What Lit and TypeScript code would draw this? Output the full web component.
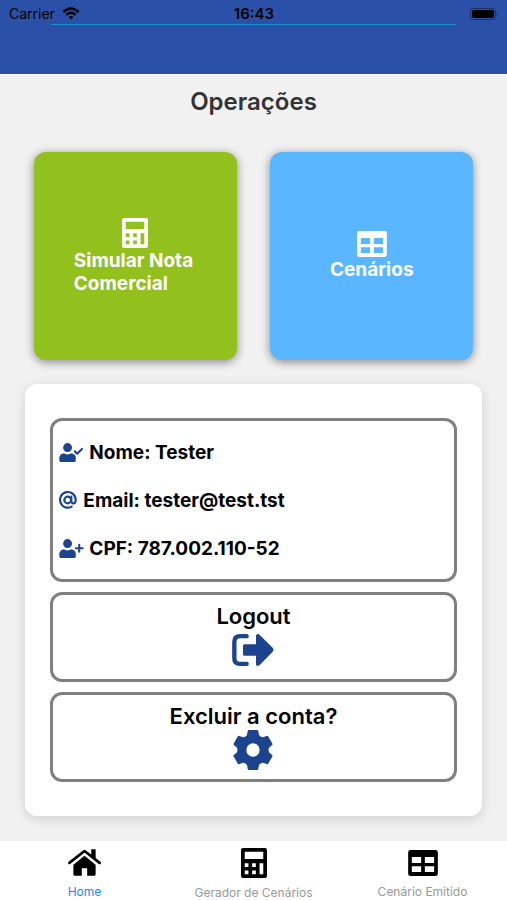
import { LitElement, html, css, svg } from "lit";
import { customElement, property } from "lit/decorators.js";

const calculator = svg`<path fill-rule="evenodd" d="M6 0H71Q77 0 77 6V83Q77 89 71 89H6Q0 89 0 83V6Q0 0 6 0ZM11 11V33H66V11ZM11 45V56H22V45ZM33 45V56H44V45ZM55 45V78H66V45ZM11 67V78H22V67ZM33 67V78H44V67Z"/>`;
const table = svg`<path fill-rule="evenodd" d="M7 0H82Q89 0 89 7V71Q89 78 82 78H7Q0 78 0 71V7Q0 0 7 0ZM11 21V39H39V21ZM50 21V39H78V21ZM11 49V66H39V49ZM50 49V66H78V49Z"/>`;
const home = svg`<path d="M49 19L82 46V75Q82 78 79 78H57V56H41V78H19Q16 78 16 75V46Z"/><path d="M69 0H82V28L69 17Z"/><path d="M4 40L49 5L94 40" fill="none" stroke="currentColor" stroke-width="8" stroke-linecap="round" stroke-linejoin="round"/>`;
const person = svg`<circle cx="25" cy="13" r="13"/><path d="M1 51V44Q1 33 13 30Q25 36 37 30Q49 33 49 44V51Q49 55 45 55H5Q1 55 1 51Z"/>`;
const personCheck = svg`${person}<path d="M46 24L53 31L67 17" fill="none" stroke="currentColor" stroke-width="6" stroke-linecap="round" stroke-linejoin="round"/>`;
const personPlus = svg`${person}<path d="M59 17V37M49 27H69" fill="none" stroke="currentColor" stroke-width="6" stroke-linecap="round"/>`;
const at = svg`<g fill="none" stroke="currentColor" stroke-width="6.5" stroke-linecap="round" stroke-linejoin="round"><circle cx="26" cy="27" r="10"/><path d="M37 17V31Q37 37 43 37Q50 37 50 27A23.5 23.5 0 1 0 38 47"/></g>`;
const exit = svg`<path d="M76 0Q80 -1 84 3L122 41Q127 47 122 53L84 92Q80 96 76 95Q72 95 72 90V65H38Q33 65 33 60V35Q33 30 38 30H72V5Q72 0 76 0Z"/><path d="M44 6H24Q7 6 7 23V72Q7 89 24 89H44" fill="none" stroke="currentColor" stroke-width="13" stroke-linecap="round"/>`;
const gear = svg`${[0, 60, 120, 180, 240, 300].map(
  (a) => svg`<path transform="rotate(${a})" d="M-12 -60H12Q16 -60 16 -56L18 -45Q22 -40 28 -36L0 -21L-28 -36Q-22 -40 -18 -45L-16 -56Q-16 -60 -12 -60Z"/>`
)}<circle r="31.5" fill="none" stroke="currentColor" stroke-width="23"/>`;
const wifi = svg`<path d="M9 12.5L6.6 10Q9 8 11.4 10Z"/><g fill="none" stroke="currentColor" stroke-width="2.4"><path d="M4.3 7.8Q9 3.8 13.7 7.8"/><path d="M1.4 5Q9 -2 16.6 5"/></g>`;
const battery = svg`<rect x="0.5" y="0.5" width="25" height="11" rx="3" fill="none" stroke="currentColor" opacity=".4"/><rect x="2" y="2" width="22" height="8" rx="2"/><path d="M27 4Q29 6 27 8Z" opacity=".5"/>`;

const icons = {
  calculator: { box: "0 0 77 89", w: 26, h: 30, art: calculator },
  table: { box: "0 0 89 78", w: 30, h: 26, art: table },
  home: { box: "0 0 98 78", w: 33, h: 27, art: home },
  personCheck: { box: "0 0 70 55", w: 24, h: 19, art: personCheck },
  personPlus: { box: "0 0 70 55", w: 24, h: 19, art: personPlus },
  at: { box: "0 0 54 54", w: 18, h: 18, art: at },
  exit: { box: "0 0 126 95", w: 42, h: 32, art: exit },
  gear: { box: "-60 -60 120 120", w: 40, h: 40, art: gear },
  wifi: { box: "0 0 18 13", w: 18, h: 13, art: wifi },
  battery: { box: "0 0 29 12", w: 29, h: 12, art: battery },
};

@customElement("app-icon")
class AppIcon extends LitElement {
  @property() name: keyof typeof icons = "home";

  static styles = css`
    :host { display: inline-flex; flex: none; }
    .glyph { display: block; fill: currentColor; overflow: visible; }
  `;

  render() {
    const icon = icons[this.name];
    return html`<svg class="glyph" viewBox=${icon.box} width=${icon.w} height=${icon.h} aria-hidden="true">${icon.art}</svg>`;
  }
}

@customElement("app-root")
class AppRoot extends LitElement {
  static styles = css`
    :host {
      display: flex;
      flex-direction: column;
      min-height: 100vh;
      background: #f1f1f1;
      color: #000;
      font-family: Inter, "Liberation Sans", sans-serif;
    }
    * { box-sizing: border-box; }
    button { font: inherit; color: inherit; cursor: pointer; }
    .top { height: 75px; background: #2a50a7; border-bottom: 1px solid #fff; }
    .status {
      display: grid;
      grid-template-columns: 1fr auto 1fr;
      align-items: center;
      height: 24px;
      padding: 3px 8px 0 9px;
      font-size: 14px;
      line-height: 20px;
    }
    .carrier { display: flex; align-items: center; gap: 7px; }
    .clock { font-size: 15px; font-weight: 600; }
    .battery { justify-self: end; }
    .rule { width: 80%; height: 1px; margin: 0 auto; background: #1b8fd0; }
    .main { flex: 1; display: flex; flex-direction: column; align-items: center; }
    .title {
      margin: 12px 0 35px;
      font-size: 24px;
      line-height: 30px;
      font-weight: 600;
      color: #333;
    }
    .cards { display: flex; justify-content: space-evenly; width: 100%; }
    .card {
      display: flex;
      flex-direction: column;
      align-items: center;
      justify-content: center;
      gap: 1px;
      width: 40%;
      min-height: 208px;
      padding: 0 40px;
      border: 0;
      border-radius: 12px;
      box-shadow: 0 2px 10px rgba(0, 0, 0, 0.45);
    }
    .card .label {
      font-size: 19px;
      line-height: 23px;
      font-weight: 700;
      text-align: left;
    }
    .card.green { background: #92c01d; color: #fff; }
    .card.blue { background: #5ab6ff; color: #fff; }
    .panel {
      display: flex;
      flex-direction: column;
      gap: 10px;
      width: 90%;
      margin: 24px 0;
      padding: 34px 25px;
      border-radius: 12px;
      background: #fff;
      box-shadow: 0 3px 12px rgba(0, 0, 0, 0.14);
    }
    .box {
      border: 3px solid #808080;
      border-radius: 12px;
      background: #fff;
    }
    .info { margin: 0; padding: 7px 6px; list-style: none; }
    .row {
      display: flex;
      align-items: center;
      gap: 6px;
      height: 48px;
      font-size: 19px;
      font-weight: 700;
    }
    .blueicon { color: #1c448e; }
    .action {
      display: flex;
      flex-direction: column;
      align-items: center;
      height: 90px;
      padding: 8px 0 0;
      font-size: 22px;
      line-height: 26px;
      font-weight: 600;
    }
    .slot { display: flex; align-items: center; height: 42px; }
    .tabs {
      display: grid;
      grid-template-columns: repeat(3, 1fr);
      background: #fff;
    }
    .tab {
      display: flex;
      flex-direction: column;
      align-items: center;
      height: 59px;
      padding-top: 7px;
      font-size: 12px;
      line-height: 16px;
      color: #999;
      text-decoration: none;
    }
    .tab.active { color: #2089f0; }
    .tabicon { display: flex; align-items: center; height: 30px; margin-bottom: 7px; color: #000; }
  `;

  render() {
    return html`
      <header class="top">
        <div class="status">
          <span class="carrier">Carrier <app-icon name="wifi"></app-icon></span>
          <span class="clock">16:43</span>
          <app-icon class="battery" name="battery"></app-icon>
        </div>
        <div class="rule"></div>
      </header>
      <main class="main">
        <h1 class="title">Operações</h1>
        <div class="cards">
          <button class="card green">
            <app-icon name="calculator"></app-icon>
            <span class="label">Simular Nota Comercial</span>
          </button>
          <button class="card blue">
            <app-icon name="table"></app-icon>
            <span class="label">Cenários</span>
          </button>
        </div>
        <section class="panel">
          <ul class="box info">
            <li class="row"><app-icon class="blueicon" name="personCheck"></app-icon>Nome: Tester</li>
            <li class="row"><app-icon class="blueicon" name="at"></app-icon>Email: tester@test.tst</li>
            <li class="row"><app-icon class="blueicon" name="personPlus"></app-icon>CPF: 787.002.110-52</li>
          </ul>
          <button class="box action">
            Logout
            <span class="slot blueicon"><app-icon name="exit"></app-icon></span>
          </button>
          <button class="box action">
            Excluir a conta?
            <span class="slot blueicon"><app-icon name="gear"></app-icon></span>
          </button>
        </section>
      </main>
      <nav class="tabs">
        <a class="tab active" href="#home"><span class="tabicon"><app-icon name="home"></app-icon></span>Home</a>
        <a class="tab" href="#gerador"><span class="tabicon"><app-icon name="calculator"></app-icon></span>Gerador de Cenários</a>
        <a class="tab" href="#emitido"><span class="tabicon"><app-icon name="table"></app-icon></span>Cenário Emitido</a>
      </nav>
    `;
  }
}
